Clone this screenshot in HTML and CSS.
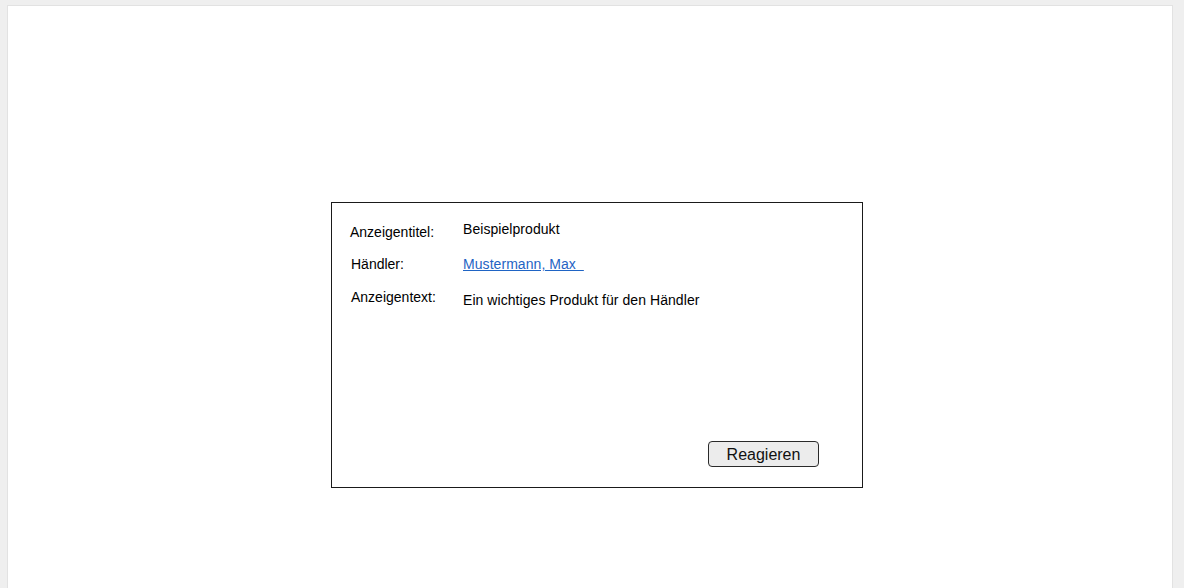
FILE: index.html
```html
<!DOCTYPE html>
<html lang="de">
<head>
<meta charset="utf-8">
<title>Anzeige</title>
<link rel="stylesheet" href="styles.css">
</head>
<body>
<div class="page">
  <div class="card">
    <div class="rows">
      <div class="labels">
        <div>Anzeigentitel:</div>
        <div class="lbl2">Händler:</div>
        <div class="lbl2">Anzeigentext:</div>
      </div>
      <div class="values">
        <div>Beispielprodukt</div>
        <div><a href="#" class="link">Mustermann, Max&nbsp;&nbsp;</a></div>
        <div>Ein wichtiges Produkt für den Händler</div>
      </div>
    </div>
    <button class="btn" type="button">Reagieren</button>
  </div>
</div>
</body>
</html>
```
FILE: styles.css
```css
html, body {
  margin: 0;
  padding: 0;
}
body {
  background: #efefef;
  font-family: "Liberation Sans", Arial, sans-serif;
  color: #000;
  height: 588px;
  overflow: hidden;
}
.page {
  box-sizing: border-box;
  margin: 5px 0 0 7px;
  width: 1166px;
  height: 600px;
  background: #fff;
  border: 1px solid #e2e2e2;
  padding-top: 196px;
  padding-left: 323px;
}
.card {
  box-sizing: border-box;
  width: 532px;
  height: 286px;
  border: 1px solid #1a1a1a;
  display: flex;
  flex-direction: column;
}
.rows {
  display: flex;
  font-size: 14px;
}
.labels {
  width: 113px;
  padding-left: 18px;
  padding-top: 12.5px;
  line-height: 32.5px;
}
.lbl2 {
  padding-left: 1px;
}
.values {
  padding-top: 8.5px;
  line-height: 35.5px;
  letter-spacing: 0.06px;
}
.link {
  color: #1f64c4;
  text-decoration: underline;
}
.btn {
  margin-top: auto;
  align-self: flex-end;
  margin-right: 43px;
  margin-bottom: 20px;
  width: 111px;
  height: 26px;
  box-sizing: border-box;
  border: 1px solid #2a2a2a;
  border-radius: 4px;
  background: #ececec;
  font-family: "Liberation Sans", Arial, sans-serif;
  font-size: 16px;
  color: #111;
  padding: 1px 0 0 0;
  line-height: 24px;
}
```
